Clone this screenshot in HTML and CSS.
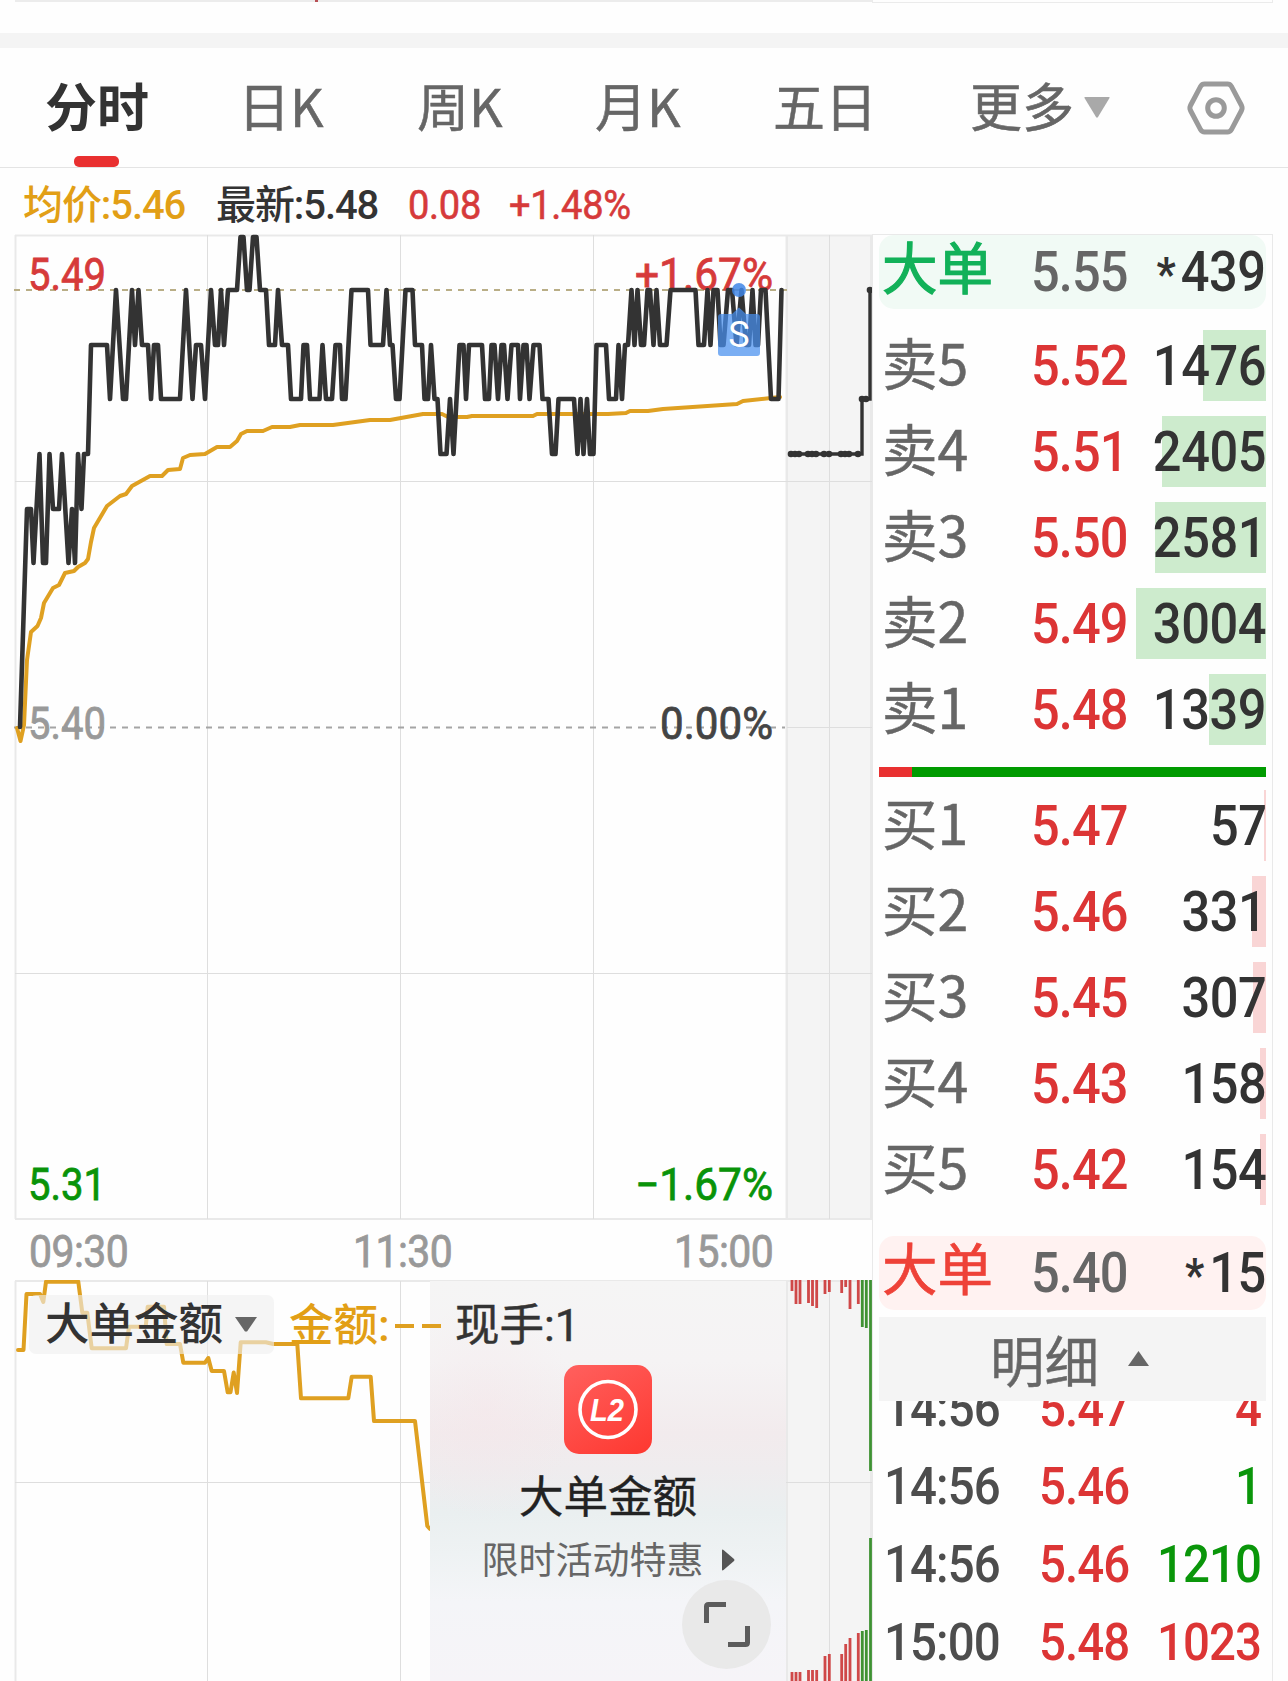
FILE: index.html
```html
<!DOCTYPE html>
<html lang="zh-CN">
<head>
<meta charset="utf-8">
<title>分时</title>
<link rel="stylesheet" href="styles.css">
</head>
<body>
<div class="app">
  <div class="previous"><div class="previous-chart"><i class="tick"></i></div><div class="previous-panel"></div></div>
  <div class="divider"></div>

  <nav class="tabs">
    <a class="tab active">分时</a>
    <a class="tab">日K</a>
    <a class="tab">周K</a>
    <a class="tab">月K</a>
    <a class="tab">五日</a>
    <a class="tab more">更多<svg class="caret" width="26" height="21" viewBox="0 0 26 21"><path d="M1 0H25Q26 0 25.500 1L14 20Q13 21.500 12 20L.5 1Q0 0 1 0Z" fill="#a9a9a9"/></svg></a>
    <svg class="settings" width="58" height="56" viewBox="0 0 58 56" fill="none" stroke="#9a9a9a" stroke-width="5"><path d="M17.500 4H40.500Q43 4 44.300 6.200L54.500 25.500Q55.700 28 54.500 30.500L44.300 49.800Q43 52 40.500 52H17.500Q15 52 13.700 49.800L3.500 30.500Q2.300 28 3.500 25.500L13.700 6.200Q15 4 17.500 4Z"/><circle cx="29" cy="28" r="8.300"/></svg>
  </nav>

  <div class="summary">
    <span class="avg">均价:5.46</span>
    <span class="last">最新:5.48</span>
    <span class="chg">0.08</span>
    <span class="pct">+1.48%</span>
  </div>

  <main class="content">
    <section class="charts">
      <svg class="price-chart" width="872" height="986" viewBox="0 234 872 986">
        <rect x="785" y="235" width="87" height="984" fill="#f4f4f4"/>
        <g class="frame"><path d="M15 235.500H872M15.500 235V1219M15 1219H872M787 235V1219M871 235V1219"/></g>
        <g class="grid"><path d="M207.500 235V1219M400.500 235V1219M593.500 235V1219M829.500 235V1219M15 481.500H872M15 973.500H872M787 727.500H872"/></g>
        <path d="M14 290H787" stroke="#b9ae86" stroke-width="1.800" stroke-dasharray="6 6"/>
        <path d="M14 727.500H785" stroke="#a4a4a4" stroke-width="1.800" stroke-dasharray="6 6"/>
        <g class="axis">
          <text class="up" x="28" y="289.500" textLength="78" lengthAdjust="spacingAndGlyphs">5.49</text>
          <text class="up" x="635" y="289.500" textLength="138" lengthAdjust="spacingAndGlyphs">+1.67%</text>
          <text class="flat" x="28" y="739" textLength="78" lengthAdjust="spacingAndGlyphs">5.40</text>
          <text class="zero" x="660" y="739" textLength="113" lengthAdjust="spacingAndGlyphs">0.00%</text>
          <text class="down" x="28" y="1199.500" textLength="78" lengthAdjust="spacingAndGlyphs">5.31</text>
          <text class="down" x="635" y="1199.500" textLength="138" lengthAdjust="spacingAndGlyphs">−1.67%</text>
        </g>
        <polyline class="avg-line" points="17,728 20.500,741 24,725 27,660 31,632 37.500,626 41,618 44,603 53,588 59,585 65,573 74,571 78,567 85,563 88,559 91,542 94,528 107,506 120,496 126,494 132,486 150,476 162,476 168,470 180,469 183,458 190,455 205,454 217,447 230,447 237,441 241,434 247,431 263,431 272,427 290,427 300,425 333,425 370,420 390,420 423,414 442,414 448,417 467,417 472,416 533,416 537,414 608,414 626,413 630,411 648,411 663,409 737,404 743,401 780,397"/>
        <polyline class="price-line" points="20,727 27,509 31,509 33.500,563 39.500,454 43,563 46,563 49.500,454 53,509 59,509 62,454 68.500,563 72,509 75,563 78,454 81.500,509 84,454 88,454 91,345 107,345 110,399 116,290 123,399 126,399 132,290 135,345 138.500,290 142,345 148,345 151,399 154,345 158,345 161,399 180,399 186,290 192.500,399 196,345 201,345 205,399 211,290 215,345 218,345 221,290 224,345 228,290 237,290 240.500,237 243.500,237 247,290 249.500,290 253,237 256.500,237 260,290 266,290 269,345 275,345 278,290 282,345 288,345 291,399 301,399 303.500,345 307,345 310,399 319.500,399 322.500,345 326,399 332,399 335.500,345 340,345 342,399 345.500,399 351.500,290 368,290 370.500,345 383,345 386.500,290 390,345 392.500,345 396,399 399.500,399 405.500,290 412.500,290 415,345 422,345 424.500,399 428,399 431,345 434.500,399 437.500,399 440.500,454 446.500,454 450,399 453.500,454 459.500,345 463.500,345 466,399 469,345 482,345 485,399 489,399 491.500,345 494.500,345 498,399 501.500,345 504,345 507.500,399 511.500,345 518,345 520,399 523.500,345 526.500,345 529.500,399 533.500,345 539.500,345 542.500,399 548.500,399 552,454 555.500,454 558.500,399 574,399 577.500,454 580.500,399 583.500,454 587,399 590,454 593.500,454 596.500,345 606,345 609,399 616,399 618.500,345 622,399 625,345 628,345 631.500,290 634.500,345 637.500,290 641,345 644,345 647.500,290 650,290 653.500,345 656.500,290 660,345 666.500,345 670.500,290 695.500,290 698.500,345 704,345 707.500,290 710.500,345 713.500,290 717.500,290 720.500,345 723.500,345 728,290 732,290 736.500,345 741.500,290 746,345 749,345 752.500,290 755.500,345 758,345 761,290 765.500,290 771,399 778.500,399 781.500,290"/>
        <polyline class="after-line" points="791,454 862,454 862,399 870,399 870,290"/>
        <g fill="#333"><circle cx="791" cy="454" r="3.300"/><circle cx="795" cy="454" r="3.300"/><circle cx="799" cy="454" r="3.300"/><circle cx="808" cy="454" r="3.300"/><circle cx="812" cy="454" r="3.300"/><circle cx="816" cy="454" r="3.300"/><circle cx="824" cy="454" r="3.300"/><circle cx="829" cy="454" r="3.300"/><circle cx="841" cy="454" r="3.300"/><circle cx="845" cy="454" r="3.300"/><circle cx="849" cy="454" r="3.300"/><circle cx="858" cy="454" r="3.300"/><circle cx="862" cy="399" r="3.300"/><circle cx="866" cy="399" r="3.300"/><circle cx="870" cy="290" r="3.300"/></g>
        <circle cx="739" cy="290" r="7" fill="#3f86e6" fill-opacity=".85"/>
        <path d="M721 314H732L739 307.500L746 314H757Q760 314 760 317V353Q760 356 757 356H721Q718 356 718 353V317Q718 314 721 314Z" fill="#468fee" fill-opacity=".72"/>
        <text class="marker" x="739" y="347" text-anchor="middle">S</text>
      </svg>

      <div class="times"><span>09:30</span><span>11:30</span><span>15:00</span></div>

      <div class="lower">
        <svg class="amount-chart" width="872" height="401" viewBox="0 1280 872 401">
          <rect x="785" y="1280" width="87" height="401" fill="#f4f4f4"/>
          <g class="frame"><path d="M15 1281H872M15.500 1281V1681M787 1281V1681M871 1281V1681"/></g>
          <g class="grid"><path d="M207.500 1281V1681M400.500 1281V1681M829.500 1281V1681M15 1482.500H872"/></g>
          <polyline class="avg-line" points="18,1350 23.500,1350 26.500,1294 40,1294 43.300,1302 46,1281.700 78.300,1281.700 82.300,1312.700 87.300,1312.700 91.700,1348.300 126,1348.300 129,1326.700 145.700,1326.700 147.700,1306.700 164,1306.700 166.700,1344 180,1344 183.300,1362.700 205,1362.700 208.300,1358 211.700,1371 224,1371 227.700,1392.300 230.500,1392.300 233.700,1372.500 237,1393 240.700,1342.300 265.700,1342.300 273.300,1344 297.300,1344 301,1398.300 348.300,1398.300 351.700,1376.700 370.700,1376.700 374,1421 415,1421 427.300,1526 430,1529"/>
          <g class="bars-red"><path d="M792 1280V1291M796 1280V1304M800 1280V1304M808.500 1280V1303M812.500 1280V1306M816.700 1280V1308M825 1280V1294M829.300 1280V1292M841.700 1280V1293M845.700 1280V1287M850 1280V1309M858.300 1280V1304M792 1681V1672M796 1681V1672M800 1681V1672M808.500 1681V1670M812.500 1681V1670M816.700 1681V1670M825 1681V1656M829.300 1681V1654M841.700 1681V1654M845.700 1681V1644M850 1681V1638M858.300 1681V1633"/></g>
          <g class="bars-green"><path d="M862.300 1280V1327M866.300 1280V1328M870.500 1280V1471M862.300 1681V1631M866.300 1681V1630M870.500 1681V1538"/></g>
        </svg>
        <div class="promo">
          <div class="logo">
            <svg width="88" height="89" viewBox="0 0 88 89"><circle cx="44" cy="44.500" r="28" fill="none" stroke="#fff" stroke-width="3.600"/><text x="43" y="56" text-anchor="middle" textLength="34" lengthAdjust="spacingAndGlyphs">L2</text></svg>
          </div>
          <div class="promo-title">大单金额</div>
          <div class="promo-link">限时活动特惠<svg width="13" height="22" viewBox="0 0 13 22"><path d="M0 1.500Q0 0 1.500 1L12 10Q13 11 12 12L1.500 21Q0 22 0 20.500Z" fill="#555"/></svg></div>
        </div>
        <div class="indicator">
          <div class="picker">大单金额<svg width="22" height="15" viewBox="0 0 22 15"><path d="M0 0H22L12 14.500H10Z" fill="#666"/></svg></div>
          <span class="amount">金额:<i></i><i></i></span>
          <span class="hands">现手:1</span>
        </div>
        <div class="expand"><svg width="46" height="45" viewBox="0 0 46 45" fill="none" stroke="#5c5c5c" stroke-width="5"><path d="M2.500 21V4.500Q2.500 2.500 4.500 2.500H22M24 42.500H41.500Q43.500 42.500 43.500 40.500V24"/></svg></div>
      </div>
    </section>

    <aside class="book">
      <div class="row big sell"><b>大单</b><span class="price">5.55</span><span class="vol"><span class="num"><em>*</em>439</span></span></div>
      <div class="orders">
        <div class="row ask"><b>卖5</b><span class="price">5.52</span><span class="vol"><i class="depth" style="width:63px"></i><span class="num">1476</span></span></div>
        <div class="row ask"><b>卖4</b><span class="price">5.51</span><span class="vol"><i class="depth" style="width:104px"></i><span class="num">2405</span></span></div>
        <div class="row ask"><b>卖3</b><span class="price">5.50</span><span class="vol"><i class="depth" style="width:111px"></i><span class="num">2581</span></span></div>
        <div class="row ask"><b>卖2</b><span class="price">5.49</span><span class="vol"><i class="depth" style="width:130px"></i><span class="num">3004</span></span></div>
        <div class="row ask"><b>卖1</b><span class="price">5.48</span><span class="vol"><i class="depth" style="width:57px"></i><span class="num">1339</span></span></div>
      </div>
      <div class="ratio"><i style="width:33px"></i></div>
      <div class="orders buy">
        <div class="row bid"><b>买1</b><span class="price">5.47</span><span class="vol"><i class="depth" style="width:2px"></i><span class="num">57</span></span></div>
        <div class="row bid"><b>买2</b><span class="price">5.46</span><span class="vol"><i class="depth" style="width:14px"></i><span class="num">331</span></span></div>
        <div class="row bid"><b>买3</b><span class="price">5.45</span><span class="vol"><i class="depth" style="width:13px"></i><span class="num">307</span></span></div>
        <div class="row bid"><b>买4</b><span class="price">5.43</span><span class="vol"><i class="depth" style="width:6px"></i><span class="num">158</span></span></div>
        <div class="row bid"><b>买5</b><span class="price">5.42</span><span class="vol"><i class="depth" style="width:6px"></i><span class="num">154</span></span></div>
      </div>
      <div class="row big buyer"><b>大单</b><span class="price">5.40</span><span class="vol"><span class="num"><em>*</em>15</span></span></div>
      <div class="detail-head">明细<svg width="21" height="15" viewBox="0 0 21 15"><path d="M10.500 0L21 15H0Z" fill="#666"/></svg></div>
      <div class="ticks">
        <div class="trade"><span>14:56</span><span class="red">5.47</span><span class="qty red">4</span></div>
        <div class="trade"><span>14:56</span><span class="red">5.46</span><span class="qty green">1</span></div>
        <div class="trade"><span>14:56</span><span class="red">5.46</span><span class="qty green">1210</span></div>
        <div class="trade"><span>15:00</span><span class="red">5.48</span><span class="qty red">1023</span></div>
      </div>
    </aside>
  </main>
</div>
</body>
</html>
```
FILE: styles.css
```css
* { box-sizing: border-box; }
body { margin: 0; background: #fff; font-family: Roboto, "Noto Sans CJK SC", sans-serif; color: #333; }
i, em { font-style: normal; }
b { font-weight: 400; }
svg { display: block; flex: none; }
.app { width: 1288px; height: 1681px; overflow: hidden; background: #fefefe; }

.previous { height: 33px; display: flex; padding-left: 15px; }
.previous-chart { width: 857px; height: 2px; background: #ececec; padding-left: 300px; }
.tick { display: block; width: 3px; height: 2px; background: #b85055; }
.previous-panel { width: 401px; height: 3px; border: 1px solid #ebebeb; border-top: 0; }
.divider { height: 15px; background: #f4f4f4; }

.tabs { height: 120px; display: grid; grid-template-columns: 193px 179px 178px 178px 197px 217px 58px; padding-left: 45px; border-bottom: 1px solid #e4e4e4; }
.tab { font: 400 52px/113px "Noto Sans CJK SC", sans-serif; color: #666; white-space: nowrap; height: 119px; -webkit-text-stroke: .5px #666; }
.tab.active { font-weight: 700; color: #333; -webkit-text-stroke: 0; line-height: 113px; }
.tab.active::after { content: ""; display: block; width: 45px; height: 11px; margin: -5px 0 0 29px; border-radius: 5px; background: #e93030; }
.more { display: flex; gap: 10px; }
.caret { margin-top: 49px; }
.settings { margin-top: 32px; }

.summary { height: 66px; display: grid; grid-template-columns: 193px 192px 101px 140px; padding-left: 23px; font-size: 40px; line-height: 75px; letter-spacing: -1.1px; white-space: nowrap; font-weight: 500; }
.avg { color: #e29f16; }
.chg, .pct { color: #d63a3a; font-weight: 400; letter-spacing: -.3px; -webkit-text-stroke: .6px #d63a3a; transform: scaleX(.95); transform-origin: left; }

.content { display: flex; height: 1447px; }
.charts { width: 872px; }
.frame { fill: none; stroke: #e9e9e9; stroke-width: 2; }
.grid { fill: none; stroke: #dedede; stroke-width: 1; }
.axis text { font-size: 44px; stroke-width: .8px; }
.up { fill: #d63a3a; stroke: #d63a3a; }
.flat { fill: #999; stroke: #999; }
.zero { fill: #444; stroke: #444; }
.down { fill: #099309; stroke: #099309; }
.avg-line { fill: none; stroke: #dfa021; stroke-width: 4; stroke-linejoin: round; stroke-linecap: round; }
.price-line { fill: none; stroke: #333; stroke-width: 4.600; stroke-linejoin: round; stroke-linecap: round; }
.after-line { fill: none; stroke: #333; stroke-width: 3.4; }
.marker { font-size: 36px; fill: #fff; }
.times { height: 60px; display: grid; grid-template-columns: 324px 321px 120px; padding-left: 29px; font-size: 44px; line-height: 65px; letter-spacing: -.6px; color: #999; -webkit-text-stroke: .8px #999; }
.times span { transform: scaleX(.93); transform-origin: left; }

.lower { position: relative; height: 401px; }
.bars-red { fill: none; stroke: #cf4848; stroke-width: 2.800; }
.bars-green { fill: none; stroke: #3f9233; stroke-width: 2.800; }
.promo { position: absolute; left: 430px; top: 1px; width: 356px; height: 400px; padding-top: 84px; display: flex; flex-direction: column; align-items: center; background: radial-gradient(ellipse 90px 110px at 55px 130px, rgba(245, 228, 232, .4), transparent), linear-gradient(#f5f5f5 0, #f5f3f4 20%, #f2ebed 38%, #efecee 47%, #eaeff0 58%, #eef2f3 68%, #f4f5f8 80%, #f6f4f8); }
.logo { width: 88px; height: 89px; border-radius: 15px; background: linear-gradient(150deg, #ff605e, #fe3830); }
.logo text { font: italic 700 32px "Liberation Sans", sans-serif; fill: #fff; }
.promo-title { font: 400 44.5px/80px "Noto Sans CJK SC", sans-serif; color: #222; -webkit-text-stroke: .4px #222; }
.promo-link { display: flex; align-items: center; gap: 18px; font: 400 37px/48px "Noto Sans CJK SC", sans-serif; color: #666; }
.promo-link svg { margin-top: 4px; }
.indicator { position: absolute; left: 29px; top: 15px; display: flex; font-size: 44.5px; line-height: 62px; font-weight: 500; white-space: nowrap; }
.picker { width: 245px; height: 59px; padding-left: 16px; border-radius: 7px; display: flex; align-items: center; gap: 12px; background: rgba(239, 239, 239, .62); }
.picker svg { margin-top: -1px; }
.amount { width: 166px; margin-left: 15px; color: #e29f16; display: flex; align-items: center; }
.amount i { width: 19px; height: 4px; margin-left: 5px; background: #dfa021; }
.amount i + i { margin-left: 8px; }
.hands { font-weight: 400; -webkit-text-stroke: .5px #333; }
.expand { position: absolute; left: 682px; top: 300px; width: 89px; height: 89px; border-radius: 50%; background: #e9e9e9; display: grid; place-items: center; }

.book { width: 401px; border: 1px solid #e9e9e9; border-bottom: 0; padding: 0 6px; }
.row { display: grid; grid-template-columns: 149px 1fr 130px; height: 86.1px; line-height: 72px; font-size: 55px; letter-spacing: -1px; font-weight: 500; padding-left: 3px; }
.row b { font: 400 55.5px/62px "Noto Sans CJK SC", sans-serif; letter-spacing: 0; color: #666; white-space: nowrap; -webkit-text-stroke: .5px #666; }
.row .price { color: #dc3535; transform: scaleX(.92); transform-origin: left; }
.vol { position: relative; text-align: right; z-index: 0; white-space: nowrap; }
.num { display: inline-block; letter-spacing: -.5px; transform: scaleX(.92); transform-origin: right; }
.depth { position: absolute; right: 0; top: 0; height: 71px; z-index: -1; }
.ask .depth { background: #cdebcd; }
.bid .depth { background: #f9d5d5; }
.big { height: 74px; border-radius: 15px; line-height: 74px; }
.row.big b { line-height: 61px; }
.big .price { color: #666; }
.big em { font-size: 46px; font-weight: 700; position: relative; top: -1px; margin-right: 6px; }
.sell { background: #f1faf5; }
.row.sell b { color: #12b159; -webkit-text-stroke: 1.2px #12b159; }
.buyer { background: #fff2f1; }
.row.buyer b { color: #ee4238; -webkit-text-stroke: .7px #ee4238; }
.orders { padding-top: 21px; height: 458px; }
.ratio { height: 10px; background: #009b00; }
.ratio i { display: block; height: 10px; background: #e93030; }
.orders.buy { padding-top: 13px; height: 459px; }
.detail-head { height: 84px; margin-top: 7px; padding-left: 111px; display: flex; align-items: center; gap: 29px; background: #f4f4f4; font: 400 54.5px/80px "Noto Sans CJK SC", sans-serif; color: #666; -webkit-text-stroke: .4px #666; }
.detail-head svg { margin-top: -2px; }
.ticks { height: 280px; overflow: hidden; padding: 0 5px; }
.trade { display: grid; grid-template-columns: 155px 110px 1fr; height: 78px; line-height: 78px; font-size: 51px; letter-spacing: -1px; color: #4d4d4d; font-weight: 500; }
.trade span { transform: scaleX(.93); transform-origin: left; }
.trade:first-child { margin-top: -31px; }
.trade .qty { text-align: right; transform-origin: right; }
.red { color: #dc3535; }
.green { color: #0a960a; }
```
